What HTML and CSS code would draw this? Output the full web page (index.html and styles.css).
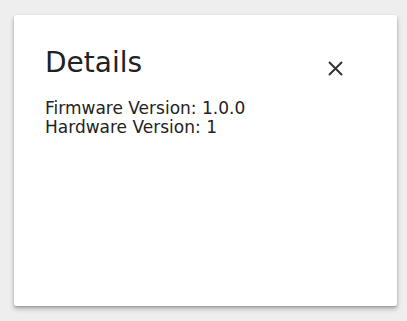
FILE: index.html
```html
<!DOCTYPE html>
<html lang="en">
<head>
  <meta charset="UTF-8" />
  <meta name="viewport" content="width=device-width, initial-scale=1.0" />
  <title>Details</title>
  <link rel="stylesheet" href="styles.css">
</head>
<body>
  <!-- Details dialog -->
  <div class="dialog">
    <div class="dialog-header">
      <h1>Details</h1>
      <button class="close-btn" aria-label="Close">
        <svg width="15" height="15" viewBox="0 0 15 15">
          <path d="M1 1 L14 14 M14 1 L1 14" stroke="#333" stroke-width="2" fill="none" />
        </svg>
      </button>
    </div>
    <div class="dialog-body">
      <p>Firmware Version: 1.0.0</p>
      <p>Hardware Version: 1</p>
    </div>
  </div>
</body>
</html>
```

FILE: styles.css
```css
* {
  margin: 0;
  padding: 0;
  box-sizing: border-box;
}

body {
  font-family: 'DejaVu Sans', sans-serif;
  background-color: #eeeeee;
  color: #222;
  padding: 15px 10px 15px 14px;
  min-height: 100vh;
}

/* Dialog card */
.dialog {
  background: #fff;
  border-radius: 2px;
  box-shadow: 0 3px 5px rgba(0, 0, 0, 0.25), 0 1px 2px rgba(0, 0, 0, 0.2);
  height: 291px;
  padding: 30px 54px 0 31px;
}

.dialog-header {
  display: flex;
  justify-content: space-between;
  align-items: flex-start;
  margin-bottom: 18px;
}

h1 {
  font-size: 28px;
  font-weight: normal;
  line-height: 36px;
}

.close-btn {
  background: none;
  border: none;
  cursor: pointer;
  display: flex;
  margin-top: 16px;
}

.dialog-body p {
  font-size: 17px;
  line-height: 19px;
}
```
